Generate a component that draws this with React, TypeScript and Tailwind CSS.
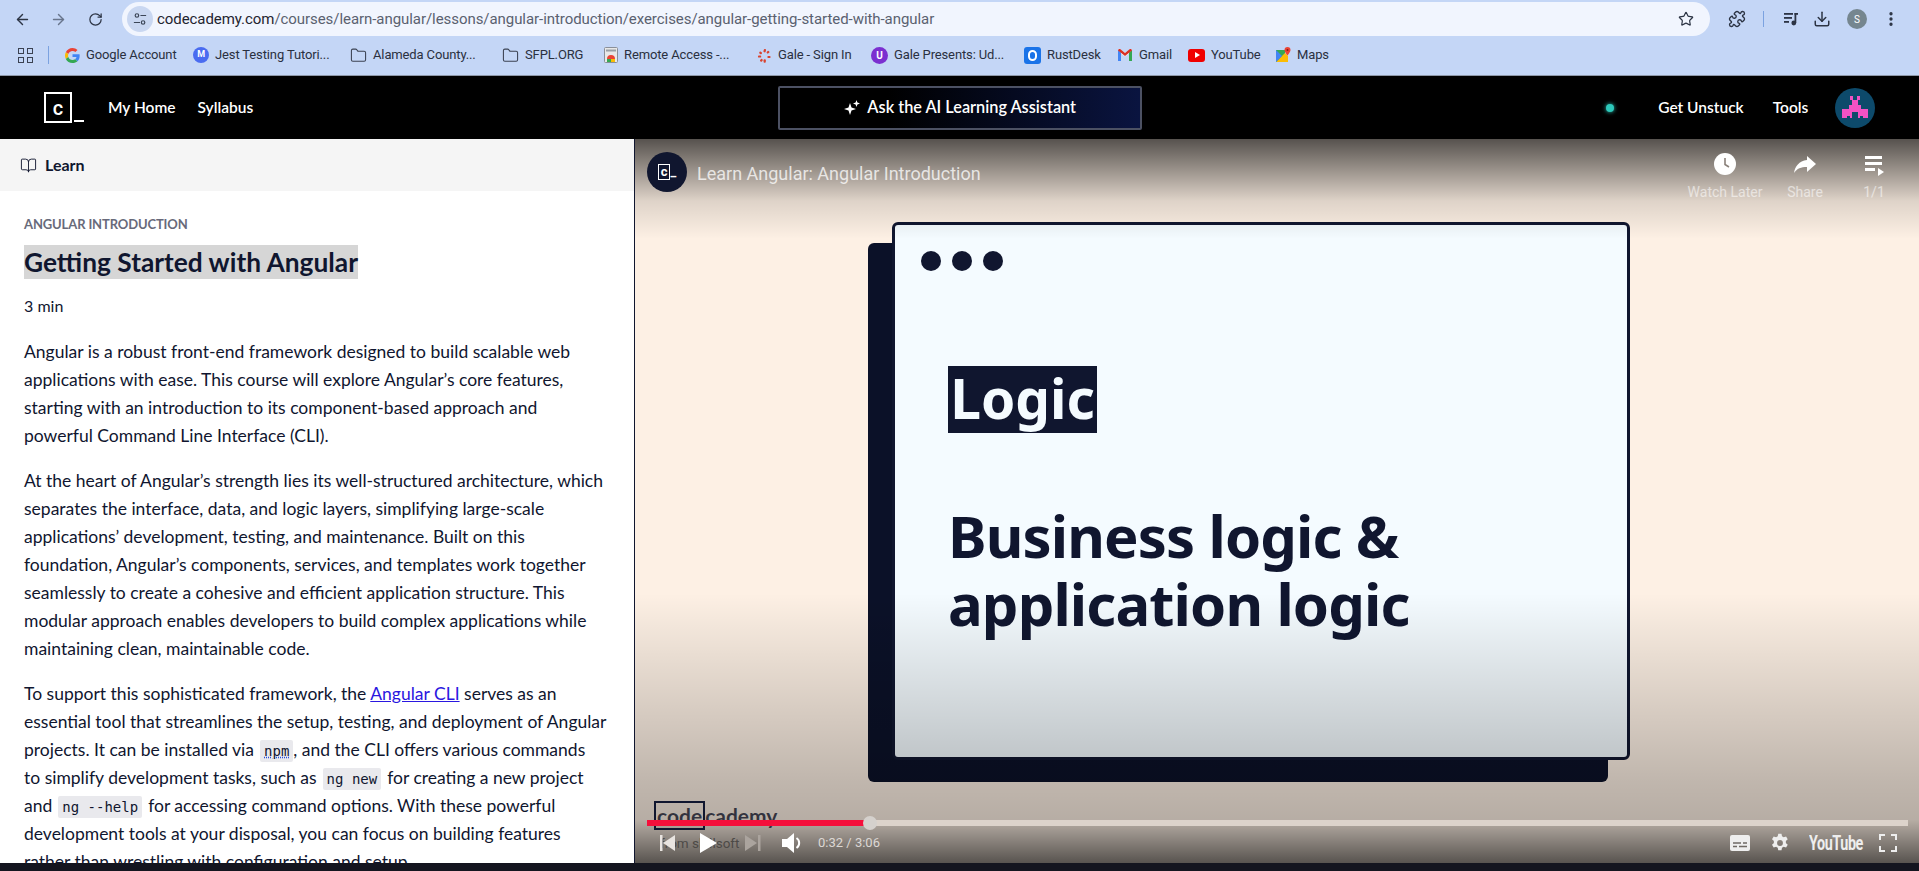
import React from 'react';
import {
  ArrowLeft, ArrowRight, RotateCw, Star, Puzzle, Download, MoreVertical, Folder, BookOpen,
} from 'lucide-react';

const CHROME = "font-['Roboto',sans-serif]";
const BODY = "font-['Lato','Open_Sans',sans-serif]";

function Tune() {
  return (
    <svg viewBox="0 0 16 16" className="h-[14px] w-[14px]" fill="none" stroke="#3c4657" strokeWidth="1.4">
      <circle cx="4.5" cy="4" r="2" />
      <path d="M8.5 4H15M1 12h7" />
      <circle cx="11.5" cy="12" r="2" />
    </svg>
  );
}

function GoogleG() {
  return (
    <svg viewBox="0 0 48 48" className="h-[15px] w-[15px]">
      <path fill="#EA4335" d="M24 9.5c3.5 0 6.7 1.2 9.2 3.6l6.9-6.9C35.9 2.4 30.4 0 24 0 14.6 0 6.5 5.4 2.6 13.2l8 6.2C12.5 13.7 17.8 9.5 24 9.5z" />
      <path fill="#4285F4" d="M46.9 24.5c0-1.6-.1-3.1-.4-4.5H24v9h12.9c-.6 3-2.2 5.5-4.7 7.2l7.7 6c4.5-4.2 7-10.300 7-17.700z" />
      <path fill="#FBBC05" d="M10.600 28.600c-.5-1.400-.8-3-.8-4.600s.3-3.200.8-4.600l-8-6.200C.9 16.500 0 20.100 0 24s.9 7.500 2.600 10.800l8-6.200z" />
      <path fill="#34A853" d="M24 48c6.500 0 11.900-2.100 15.900-5.800l-7.700-6c-2.200 1.400-4.900 2.300-8.200 2.300-6.200 0-11.500-4.200-13.400-9.900l-8 6.200C6.500 42.600 14.600 48 24 48z" />
    </svg>
  );
}

function GaleLogo() {
  return (
    <svg viewBox="0 0 16 16" className="h-[15px] w-[15px]" fill="#d9432f">
      <rect x="7" y="1" width="2.400" height="3.600" rx="1" transform="rotate(15 8 3)" />
      <rect x="11" y="3" width="2.400" height="3" rx="1" transform="rotate(50 12 4)" />
      <rect x="2.500" y="3.500" width="2.400" height="3" rx="1" transform="rotate(-50 4 5)" />
      <rect x="1" y="8" width="3.500" height="2.200" rx="1" />
      <rect x="11" y="8.500" width="3.500" height="2.200" rx="1" />
      <rect x="3.500" y="11.500" width="2.400" height="3" rx="1" transform="rotate(40 4.500 13)" />
      <rect x="7" y="12" width="2.400" height="3.600" rx="1" />
    </svg>
  );
}

function GmailLogo() {
  return (
    <svg viewBox="0 0 16 14" className="h-[14px] w-[16px]" fill="none">
      <path d="M1 1.500V13h3V5.500l4 3 4-3V13h3V1.500L13 1 8 5 3 1z" fill="#fff" />
      <path d="M1 13V2l3 2.500V13z" fill="#4285f4" />
      <path d="M15 13V2l-3 2.500V13z" fill="#34a853" />
      <path d="M1 2.500C1 1 2.500 .5 3.500 1.300L8 5l4.500-3.700C13.500 .5 15 1 15 2.500L8 8z" fill="#d93025" />
    </svg>
  );
}

function MapsLogo() {
  return (
    <svg viewBox="0 0 16 16" className="h-[16px] w-[16px]">
      <path d="M1 3h9v12H1z" fill="#34a853" />
      <path d="M1 15l9-9 3 3v6z" fill="#fbbc04" />
      <path d="M1 3l6 6-6 6z" fill="#4285f4" />
      <path d="M12.500 0a3 3 0 0 0-3 3c0 2 3 5.500 3 5.500s3-3.500 3-5.500a3 3 0 0 0-3-3z" fill="#ea4335" />
      <circle cx="12.500" cy="3" r="1" fill="#8b1a10" />
    </svg>
  );
}

function RemoteLogo() {
  return (
    <svg viewBox="0 0 14 16" className="h-[16px] w-[14px]">
      <rect x="0.500" y="0.500" width="13" height="15" rx="1" fill="#e8e8e8" stroke="#8a8f99" />
      <rect x="2" y="2.500" width="10" height="2" fill="#9aa0a6" />
      <path d="M3 12a4 4 0 0 1 8 0z" fill="#ea4335" />
      <path d="M3 12h4v3H3z" fill="#34a853" />
      <path d="M7 12h4v3H7z" fill="#fbbc04" />
    </svg>
  );
}

type Mark = { label: string; icon: React.ReactNode; width: string };

const folderIcon = <Folder size={17} strokeWidth={1.5} className="text-[#3b4252]" />;

const BOOKMARKS: Mark[] = [
  { label: 'Google Account', width: 'w-[128px]', icon: <GoogleG /> },
  {
    label: 'Jest Testing Tutori...',
    width: 'w-[157px]',
    icon: <span className="flex h-[16px] w-[16px] items-center justify-center rounded-full bg-[#4a6cf0] text-[9px] font-bold text-white">M</span>,
  },
  { label: 'Alameda County...', width: 'w-[152px]', icon: folderIcon },
  { label: 'SFPL.ORG', width: 'w-[102px]', icon: folderIcon },
  { label: 'Remote Access -...', width: 'w-[153px]', icon: <RemoteLogo /> },
  { label: 'Gale - Sign In', width: 'w-[114px]', icon: <GaleLogo /> },
  {
    label: 'Gale Presents: Ud...',
    width: 'w-[153px]',
    icon: <span className="flex h-[17px] w-[17px] items-center justify-center rounded-full bg-[#7b2fd0] text-[10px] font-bold text-white">U</span>,
  },
  {
    label: 'RustDesk',
    width: 'w-[93px]',
    icon: (
      <span className="flex h-[17px] w-[17px] items-center justify-center rounded-[3px] bg-[#1a73e8]">
        <span className="h-[11px] w-[9px] rounded-full border-2 border-white" />
      </span>
    ),
  },
  { label: 'Gmail', width: 'w-[71px]', icon: <GmailLogo /> },
  {
    label: 'YouTube',
    width: 'w-[87px]',
    icon: (
      <span className="flex h-[13px] w-[17px] items-center justify-center rounded-[3px] bg-[#f00000]">
        <span className="ml-[1px] h-0 w-0 border-y-[3px] border-l-[5px] border-y-transparent border-l-white" />
      </span>
    ),
  },
  { label: 'Maps', width: 'w-[60px]', icon: <MapsLogo /> },
];

function QueueMusic() {
  return (
    <svg viewBox="0 0 16 16" className="h-[16px] w-[16px]" fill="#2c3444">
      <rect x="1" y="2" width="9" height="1.800" />
      <rect x="1" y="6" width="8" height="1.800" />
      <rect x="1" y="10" width="5" height="1.800" />
      <rect x="11.500" y="2" width="1.800" height="10" />
      <circle cx="10.800" cy="12" r="2.400" />
      <rect x="11.500" y="2" width="3.500" height="1.800" />
    </svg>
  );
}

function BrowserChrome() {
  return (
    <div className={`bg-[#c4d6f6] ${CHROME}`}>
      <div className="flex h-[38px] items-center text-[#2c3444]">
        <div className="flex w-[122px] items-center pl-[14px]">
          <ArrowLeft size={17} strokeWidth={2} />
          <ArrowRight size={17} strokeWidth={2} className="ml-[19px] text-[#68758c]" />
          <RotateCw size={15} strokeWidth={2} className="ml-[21px]" />
        </div>
        <div className="flex h-[34px] w-[1588px] items-center rounded-full bg-[#f1f5fe] pl-[5px] pr-[16px]">
          <span className="flex h-[26px] w-[26px] items-center justify-center rounded-full bg-[#c9d7f1]">
            <Tune />
          </span>
          <span className="ml-[4px] flex-1 text-[15px] tracking-[-0.004em] text-[#1f2430]">
            codecademy.com<span className="text-[#5a6170]">/courses/learn-angular/lessons/angular-introduction/exercises/angular-getting-started-with-angular</span>
          </span>
          <Star size={16} strokeWidth={1.8} />
        </div>
        <Puzzle size={18} strokeWidth={1.8} className="ml-[18px]" />
        <span className="ml-[17px] h-[16px] w-px bg-[#7ba2e0]" />
        <span className="ml-[19px]"><QueueMusic /></span>
        <Download size={18} strokeWidth={2} className="ml-[14px]" />
        <span className="ml-[16px] flex h-[20px] w-[20px] items-center justify-center rounded-full bg-[#75868f] text-[10px] text-white">S</span>
        <MoreVertical size={18} strokeWidth={2.4} className="ml-[15px]" />
      </div>
      <div className="flex h-[38px] items-center border-b border-[#8e98a8] pb-[3px] text-[13px] tracking-[-0.01em] text-[#2a3040]">
        <span className="ml-[18px] grid h-[15px] w-[15px] grid-cols-2 gap-[3px]">
          <span className="border-[1.5px] border-[#3b4252]" />
          <span className="border-[1.5px] border-[#3b4252]" />
          <span className="border-[1.5px] border-[#3b4252]" />
          <span className="border-[1.5px] border-[#3b4252]" />
        </span>
        <span className="ml-[15px] mr-[16px] h-[18px] w-px bg-[#7ba2e0]" />
        {BOOKMARKS.map((b) => (
          <span key={b.label} className={`flex shrink-0 items-center gap-[6px] whitespace-nowrap ${b.width}`}>
            {b.icon}
            {b.label}
          </span>
        ))}
      </div>
    </div>
  );
}

function Invader() {
  return (
    <svg viewBox="0 0 40 40" className="h-[40px] w-[40px] rounded-full">
      <rect width="40" height="40" fill="#0d4a6b" />
      <g fill="#f252c4">
        <rect x="15" y="8" width="3" height="4" />
        <rect x="22" y="8" width="3" height="4" />
        <rect x="17" y="12" width="6" height="5" />
        <rect x="14" y="17" width="12" height="4" />
        <rect x="7" y="21" width="26" height="9" />
      </g>
      <g fill="#0d4a6b">
        <rect x="17" y="24" width="6" height="6" />
        <rect x="12" y="28" width="3" height="2" />
        <rect x="25" y="28" width="3" height="2" />
      </g>
    </svg>
  );
}

function SiteNav() {
  return (
    <div className={`flex h-[63px] items-center bg-black text-[15.5px] font-semibold text-white ${BODY}`}>
      <div className="ml-[44px] flex w-[40px] items-end">
        <span className={`flex h-[31px] w-[28px] items-center justify-center border-[2.500px] border-white text-[20px] font-medium leading-none ${CHROME}`}>c</span>
        <span className="ml-[2px] mb-[1px] h-[2.500px] w-[10px] bg-white" />
      </div>
      <span className="ml-[24px]">My Home</span>
      <span className="ml-[22px]">Syllabus</span>
      <div className="ml-[525px] flex h-[44px] w-[364px] items-center justify-center gap-[7px] rounded-[2px] border-2 border-[#4c5163] bg-[linear-gradient(90deg,#000_0%,#000_30%,#0a1440_100%)] text-[16.300px]">
        <svg viewBox="0 0 16 16" className="h-[16px] w-[16px]" fill="white">
          <path d="M6 3l1.500 4.500L12 9l-4.500 1.500L6 15l-1.500-4.500L0 9l4.500-1.500zM12.500 0l.9 2.600L16 3.500l-2.600.9-.9 2.600-.9-2.600L9 3.500l2.600-.9z" />
        </svg>
        Ask the AI Learning Assistant
      </div>
      <span className="ml-[464px] h-[8px] w-[8px] rounded-full bg-[#2dc9bb] shadow-[0_0_4px_#2dc9bb]" />
      <span className="ml-[44px]">Get Unstuck</span>
      <span className="ml-[29px]">Tools</span>
      <span className="ml-[27px]"><Invader /></span>
    </div>
  );
}

function Code({ children, dotted, tight }: { children: string; dotted?: boolean; tight?: boolean }) {
  return (
    <code className={`ml-[6px] rounded-[2px] bg-[#e9e9ed] px-[4px] py-[3px] font-['DejaVu_Sans_Mono',monospace] text-[14px] leading-none ${tight ? '' : 'mr-[6px]'} ${dotted ? 'underline decoration-dotted decoration-[#2a50d8]' : ''}`}>
      {children}
    </code>
  );
}

function LessonPanel() {
  return (
    <div className={`h-full w-[634px] shrink-0 overflow-hidden bg-white text-[#10162f] ${BODY}`}>
      <div className="flex h-[52px] items-center gap-[8px] bg-[#f5f5f5] pl-[20px]">
        <BookOpen size={17} strokeWidth={1.300} />
        <span className="text-[16px] font-bold">Learn</span>
      </div>
      <div className="px-[24px] text-[17.500px] leading-[28px]">
        <div className="mt-[23px] text-[13px] font-bold leading-[20px] tracking-[-0.01em] text-[#686a7a]">ANGULAR INTRODUCTION</div>
        <h1 className="mt-[11px] w-fit bg-[#d6d6d6] text-[26.300px] font-bold leading-[34px]">Getting Started with Angular</h1>
        <p className="mt-[13px] text-[16px]">3 min</p>
        <p className="mt-[18px]">
          Angular is a robust front-end framework designed to build scalable web<br />
          applications with ease. This course will explore Angular’s core features,<br />
          starting with an introduction to its component-based approach and<br />
          powerful Command Line Interface (CLI).
        </p>
        <p className="mt-[17px]">
          At the heart of Angular’s strength lies its well-structured architecture, which<br />
          separates the interface, data, and logic layers, simplifying large-scale<br />
          applications’ development, testing, and maintenance. Built on this<br />
          foundation, Angular’s components, services, and templates work together<br />
          seamlessly to create a cohesive and efficient application structure. This<br />
          modular approach enables developers to build complex applications while<br />
          maintaining clean, maintainable code.
        </p>
        <p className="mt-[17px]">
          To support this sophisticated framework, the <a className="text-[#2a17e0] underline">Angular CLI</a> serves as an<br />
          essential tool that streamlines the setup, testing, and deployment of Angular<br />
          projects. It can be installed via<Code dotted tight>npm</Code>, and the CLI offers various commands<br />
          to simplify development tasks, such as<Code>ng new</Code>for creating a new project<br />
          and<Code>ng --help</Code>for accessing command options. With these powerful<br />
          development tools at your disposal, you can focus on building features<br />
          rather than wrestling with configuration and setup.
        </p>
      </div>
    </div>
  );
}

function SlideCard() {
  return (
    <div className="relative ml-[257px] mt-[83px] h-[538px] w-[738px]">
      <div className="absolute -left-[24px] top-[21px] -z-10 h-[539px] w-[740px] rounded-[6px] bg-[#0b1128]" />
      <div className={`h-full w-full rounded-[6px] border-[3px] border-[#10162f] bg-[#f4fbff] pl-[53px] pt-[26px] font-['Noto_Sans',sans-serif] text-[#10162f]`}>
        <div className="-ml-[27px] flex gap-[11px]">
          <span className="h-[20px] w-[20px] rounded-full bg-[#10162f]" />
          <span className="h-[20px] w-[20px] rounded-full bg-[#10162f]" />
          <span className="h-[20px] w-[20px] rounded-full bg-[#10162f]" />
        </div>
        <div className="mt-[95px] flex h-[67px] w-[149px] items-center justify-center bg-[#10162f] pb-[4px] text-[55px] font-bold leading-none text-[#f4fbff]">Logic</div>
        <div className="mt-[69px] text-[58px] font-bold leading-[68px] tracking-[-0.015em]">
          Business logic &amp;<br />application logic
        </div>
      </div>
    </div>
  );
}

function PlayerTop() {
  return (
    <div className={`absolute inset-x-0 top-0 flex items-start pl-[12px] pt-[13px] text-white/80 ${CHROME}`}>
      <span className="flex h-[40px] w-[40px] items-center justify-center rounded-full bg-[#10162f] text-[13px] font-bold text-white">
        <span className="border border-white px-[2px] leading-[14px]">c</span>_
      </span>
      <span className="ml-[10px] mt-[8px] flex-1 text-[18px] text-white/75">Learn Angular: Angular Introduction</span>
      <div className="flex w-[88px] flex-col items-center">
        <svg viewBox="0 0 24 24" className="h-[24px] w-[24px]" fill="#fff">
          <circle cx="12" cy="12" r="11" />
          <path d="M12 6v6.500l4 2.500" stroke="#8a817a" strokeWidth="1.600" fill="none" />
        </svg>
        <span className="mt-[6px] text-[14px] text-white/55">Watch Later</span>
      </div>
      <div className="flex w-[72px] flex-col items-center">
        <svg viewBox="0 0 24 24" className="h-[24px] w-[24px]" fill="#fff">
          <path d="M14 4l9 8-9 8v-5c-6 0-10 1.500-13 6 1-6.500 5-12 13-13z" />
        </svg>
        <span className="mt-[6px] text-[14px] text-white/55">Share</span>
      </div>
      <div className="ml-[21px] mr-[33px] flex w-[24px] flex-col items-center">
        <svg viewBox="0 0 24 24" className="h-[24px] w-[24px]" fill="#fff">
          <path d="M3 4h17v3H3zM3 10h17v3H3zM3 16h10v3H3zM16 16l6 4-6 4z" />
        </svg>
        <span className="mt-[6px] text-[14px] text-white/55">1/1</span>
      </div>
    </div>
  );
}

function PlayerControls() {
  return (
    <>
      {/* logo burned into the video, sits under the seek bar */}
      <div className={`absolute left-[19px] top-[665px] text-[#1a1c2c]/85 ${BODY}`}>
        <span className="text-[21px] font-bold leading-[24px]"><span className="border-2 border-[#10162f] px-[1px]">code</span>cademy</span>
      </div>
      <div className={`absolute left-[25px] top-[694px] text-[13.500px] text-[#4d4a47] ${CHROME}`}>from skillsoft</div>

      <div className="absolute inset-x-0 bottom-[37px] pl-[12px] pr-[11px]">
        <div className="relative h-[6px] bg-[#dcd3cb]">
          <div className="h-full w-[223px] bg-[#f50f3b]" />
          <span className="absolute left-[216px] top-[-4px] h-[14px] w-[14px] rounded-full bg-[#d5d1cd]" />
        </div>
      </div>
      <div className={`absolute inset-x-0 bottom-[6px] flex h-[28px] items-center text-white ${CHROME}`}>
        <svg viewBox="0 0 18 18" className="ml-[23px] h-[18px] w-[18px]" fill="#e8e4e0"><path d="M2 1h2.500v16H2zM17 1v16L5 9z" /></svg>
        <svg viewBox="0 0 18 20" className="ml-[23px] h-[20px] w-[18px]" fill="#fff"><path d="M1 0l17 10L1 20z" /></svg>
        <svg viewBox="0 0 18 18" className="ml-[27px] h-[18px] w-[18px]" fill="#aba49e"><path d="M1 1l12 8-12 8zM14 1h2.500v16H14z" /></svg>
        <svg viewBox="0 0 24 24" className="ml-[18px] h-[24px] w-[24px]" fill="#fff">
          <path d="M2 8v8h5l7 6V2L7 8z" />
          <path d="M16.500 7a6 6 0 0 1 0 10" stroke="#fff" strokeWidth="2" fill="none" />
        </svg>
        <span className="ml-[14px] text-[13px] text-[#dcd8d4]">0:32 / 3:06</span>
        <span className="flex-1" />
        <svg viewBox="0 0 20 16" className="h-[16px] w-[20px]" fill="#eee">
          <rect width="20" height="16" rx="2" />
          <path d="M3 8h8M13 8h4M3 11.500h4M9 11.500h8" stroke="#6f6a65" strokeWidth="1.500" />
        </svg>
        <svg viewBox="0 0 24 24" className="ml-[20px] h-[20px] w-[20px]" fill="#eee">
          <path d="M13.800 1l.6 3a8 8 0 0 1 2 1.200l2.900-1 2 3.400-2.300 2a8 8 0 0 1 0 2.400l2.300 2-2 3.400-2.900-1a8 8 0 0 1-2 1.200l-.6 3h-3.900l-.6-3a8 8 0 0 1-2-1.200l-2.900 1-2-3.400 2.300-2a8 8 0 0 1 0-2.400l-2.300-2 2-3.400 2.900 1a8 8 0 0 1 2-1.200l.6-3zM12 8.500a3.500 3.500 0 1 0 0 7 3.500 3.500 0 0 0 0-7z" fillRule="evenodd" />
        </svg>
        <span className="ml-[19px] w-[52px] origin-left scale-x-[0.72] whitespace-nowrap text-[20px] font-bold tracking-[-0.03em] text-[#eee]">YouTube</span>
        <svg viewBox="0 0 18 18" className="ml-[18px] mr-[22px] h-[18px] w-[18px]" fill="none" stroke="#eee" strokeWidth="2">
          <path d="M1 6V1h5M12 1h5v5M17 12v5h-5M6 17H1v-5" />
        </svg>
      </div>
    </>
  );
}

function VideoPanel() {
  return (
    <div className="relative isolate h-full flex-1 overflow-hidden border-l border-[#10162f] bg-[#fdf0e4]">
      <div className="flex h-full">
        <SlideCard />
      </div>
      <div className="pointer-events-none absolute inset-x-0 top-0 h-[100px] bg-[linear-gradient(180deg,rgba(0,0,0,0.66)_0%,rgba(0,0,0,0.12)_62%,rgba(0,0,0,0)_100%)]" />
      <div className="pointer-events-none absolute inset-x-0 bottom-0 h-[270px] bg-[linear-gradient(180deg,rgba(0,0,0,0)_0%,rgba(0,0,0,0.24)_69%,rgba(0,0,0,0.28)_84%,rgba(0,0,0,0.65)_100%)]" />
      <PlayerTop />
      <PlayerControls />
    </div>
  );
}

export default function App() {
  return (
    <div className="flex h-[871px] w-full flex-col overflow-hidden bg-[#14151f]">
      <BrowserChrome />
      <SiteNav />
      <div className="flex h-[724px] shrink-0">
        <LessonPanel />
        <VideoPanel />
      </div>
    </div>
  );
}
